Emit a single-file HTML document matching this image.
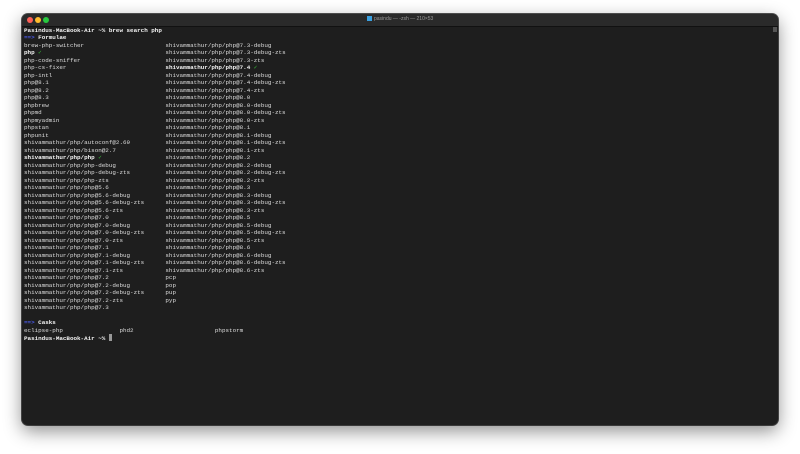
<!DOCTYPE html>
<html><head><meta charset="utf-8"><style>
html,body{margin:0;padding:0;background:#fff;width:800px;height:454px;overflow:hidden}
.win{position:absolute;left:22px;top:14px;width:756px;height:411px;background:#1e1e1e;border-radius:6px;box-shadow:0 6px 18px rgba(0,0,0,.45),0 0 0 1px #555;overflow:hidden}
.tb{position:absolute;left:0;top:0;width:756px;height:12px;background:#2a2a2a;border-bottom:1px solid #111}
.d{position:absolute;top:3px;width:6px;height:6px;border-radius:50%}
.ttl{position:absolute;left:345px;top:2px;font:5px "Liberation Sans",sans-serif;color:#9a9a9a}
.ttl i{display:inline-block;width:5px;height:5px;background:#3aa0e0;margin-right:2px;vertical-align:-1px}
pre{position:absolute;left:2px;top:12.5px;margin:0;font:5.9px/7.5px "Liberation Mono",monospace;color:#dcdcdc;letter-spacing:0}
b{color:#f4f4f4}
.a{color:#4a5ae8;font-weight:bold}
.g{color:#39c03a}
.cur{display:inline-block;width:3.5px;height:7px;background:#999;vertical-align:-1px}
.sb{position:absolute;right:1px;top:13px;width:4px;height:5px;background:#555}
</style></head><body>
<div class="win">
<div class="tb"><div class="d" style="left:5px;background:#fe5f57"></div><div class="d" style="left:13px;background:#febc2e"></div><div class="d" style="left:21px;background:#28c840"></div>
<div class="ttl"><i></i>pasindu — -zsh — 210×53</div></div>
<div class="sb"></div>
<pre><b>Pasindus-MacBook-Air ~% brew search php</b>
<span class="a">==&gt;</span> <b>Formulae</b>
brew-php-switcher                       shivammathur/php/php@7.3-debug
<b>php</b> <span class="g">✓</span>                                   shivammathur/php/php@7.3-debug-zts
php-code-sniffer                        shivammathur/php/php@7.3-zts
php-cs-fixer                            <b>shivammathur/php/php@7.4</b> <span class="g">✓</span>
php-intl                                shivammathur/php/php@7.4-debug
php@8.1                                 shivammathur/php/php@7.4-debug-zts
php@8.2                                 shivammathur/php/php@7.4-zts
php@8.3                                 shivammathur/php/php@8.0
phpbrew                                 shivammathur/php/php@8.0-debug
phpmd                                   shivammathur/php/php@8.0-debug-zts
phpmyadmin                              shivammathur/php/php@8.0-zts
phpstan                                 shivammathur/php/php@8.1
phpunit                                 shivammathur/php/php@8.1-debug
shivammathur/php/autoconf@2.69          shivammathur/php/php@8.1-debug-zts
shivammathur/php/bison@2.7              shivammathur/php/php@8.1-zts
<b>shivammathur/php/php</b> <span class="g">✓</span>                  shivammathur/php/php@8.2
shivammathur/php/php-debug              shivammathur/php/php@8.2-debug
shivammathur/php/php-debug-zts          shivammathur/php/php@8.2-debug-zts
shivammathur/php/php-zts                shivammathur/php/php@8.2-zts
shivammathur/php/php@5.6                shivammathur/php/php@8.3
shivammathur/php/php@5.6-debug          shivammathur/php/php@8.3-debug
shivammathur/php/php@5.6-debug-zts      shivammathur/php/php@8.3-debug-zts
shivammathur/php/php@5.6-zts            shivammathur/php/php@8.3-zts
shivammathur/php/php@7.0                shivammathur/php/php@8.5
shivammathur/php/php@7.0-debug          shivammathur/php/php@8.5-debug
shivammathur/php/php@7.0-debug-zts      shivammathur/php/php@8.5-debug-zts
shivammathur/php/php@7.0-zts            shivammathur/php/php@8.5-zts
shivammathur/php/php@7.1                shivammathur/php/php@8.6
shivammathur/php/php@7.1-debug          shivammathur/php/php@8.6-debug
shivammathur/php/php@7.1-debug-zts      shivammathur/php/php@8.6-debug-zts
shivammathur/php/php@7.1-zts            shivammathur/php/php@8.6-zts
shivammathur/php/php@7.2                pcp
shivammathur/php/php@7.2-debug          pop
shivammathur/php/php@7.2-debug-zts      pup
shivammathur/php/php@7.2-zts            pyp
shivammathur/php/php@7.3

<span class="a">==&gt;</span> <b>Casks</b>
eclipse-php                phd2                       phpstorm
<b>Pasindus-MacBook-Air ~%</b> <span class="cur"></span></pre>
</div>
</body></html>
